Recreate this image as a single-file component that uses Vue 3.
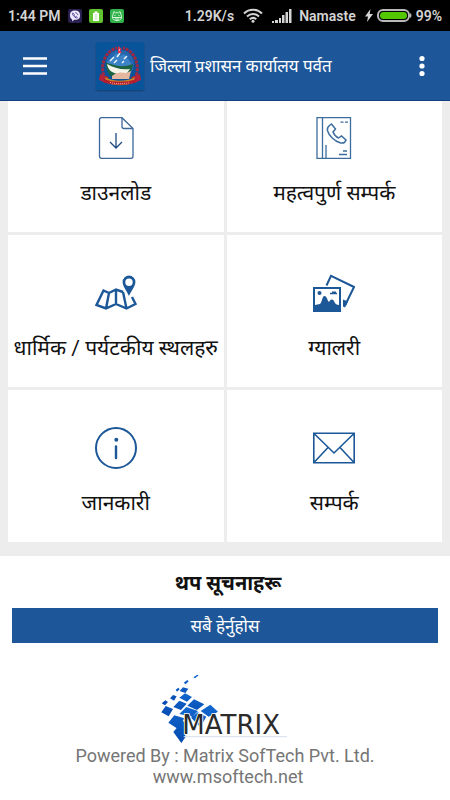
<script setup>
const tiles = [
  { icon: 'download', label: 'डाउनलोड' },
  { icon: 'phonebook', label: 'महत्वपुर्ण सम्पर्क' },
  { icon: 'map', label: 'धार्मिक / पर्यटकीय स्थलहरु' },
  { icon: 'gallery', label: 'ग्यालरी' },
  { icon: 'info', label: 'जानकारी' },
  { icon: 'mail', label: 'सम्पर्क' }
]
</script>

<template>
  <div class="app">
    <!-- status bar -->
    <div class="status-bar">
      <span class="clock">1:44 PM</span>
      <svg class="status-icon" viewBox="0 0 14 14">
        <rect width="14" height="14" rx="2" fill="#2b2150" />
        <path d="M7 1.5C3.5 1.5 2 3 2 6.2c0 2.300.8 3.600 2.200 4.200v2.100l2-1.700c4 .2 5.800-1 5.800-4.600C12 3 10.500 1.500 7 1.500z" fill="#eee9ff" />
        <path d="M4.700 3.900c-.7.6 0 2.200 1.300 3.500s2.800 2 3.500 1.300L8.300 7.500l-.8.4-1.600-1.600.4-.9zM7.300 3.700c1.500.1 2.400 1 2.500 2.500" fill="none" stroke="#5b479c" />
      </svg>
      <svg class="status-icon" viewBox="0 0 14 14">
        <rect width="14" height="14" rx="2" fill="#62c331" />
        <path d="M5.500 2.500h3V4H10v8H4V4h1.500z" fill="#fff" />
        <path d="M5.500 6h3M5.500 8h3M5.500 10h3" stroke="#b9e5a2" />
      </svg>
      <svg class="status-icon" viewBox="0 0 14 14">
        <rect width="14" height="14" rx="2" fill="#32b34a" />
        <path d="M3 5.500 4 2.500l1.500 1.300h3L10 2.500l1 3c1.300 3.400.3 6-4 6s-5.300-2.600-4-6z" fill="none" stroke="#d7f5dc" />
        <path d="M4.500 6.500h1M8.500 6.500h1M3 8.500h8M5 10h4" stroke="#d7f5dc" />
      </svg>
      <span class="speed">1.29K/s</span>
      <svg class="wifi" viewBox="0 0 20 15">
        <g fill="none" stroke="#d4d4d4" stroke-width="2">
          <path d="M1 5.500c5-5 13-5 18 0" />
          <path d="M4 8.500c3.500-3.300 8.500-3.300 12 0" />
          <path d="M6.700 11.300c2-1.700 4.600-1.700 6.600 0" />
        </g>
        <circle cx="10" cy="13.300" r="1.500" fill="#d4d4d4" />
      </svg>
      <svg class="signal" viewBox="0 0 20 14">
        <path d="M0 14v-2h2v2zM3 14v-3h3v3zM7 14V9h2v5zM10 14V6h2.500v8zM13.500 14V3H16v11zM17 14V0h2.500v14z" fill="#d4d4d4" />
      </svg>
      <span>Namaste</span>
      <svg class="bolt" viewBox="0 0 8 13">
        <path d="M5.500 0 0 7.500h3L2 13l6-8H4.700z" fill="#d4d4d4" />
      </svg>
      <svg class="battery" viewBox="0 0 35 13">
        <rect x="1" y="1" width="31" height="11" rx="5" fill="#000" stroke="#b9b9b9" stroke-width="2" />
        <rect x="3" y="3" width="27" height="7" rx="3.500" fill="#53c800" />
        <path d="M33 4c2 1 2 4 0 5z" fill="#b9b9b9" />
      </svg>
      <span>99%</span>
    </div>

    <!-- app bar -->
    <header class="app-bar">
      <button class="menu-btn" aria-label="Menu">
        <svg viewBox="0 0 24 18">
          <path d="M0 1.500h24M0 9h24M0 16.500h24" stroke="#fff" stroke-width="2.400" />
        </svg>
      </button>
      <svg class="emblem" viewBox="0 0 48 48">
        <rect width="48" height="48" rx="2" fill="#07549a" />
        <path d="M9 37C3 24 9 9 21 6M39 37c6-13 0-28-12-31" fill="none" stroke="#a32740" stroke-width="3" stroke-dasharray="3 1" />
        <path d="M4 32l9 3-3 6-7-3zM44 32l-9 3 3 6 7-3z" fill="#b3243a" />
        <circle cx="24" cy="22" r="14" fill="#2467ae" />
        <path d="M11 20l6-5 3-4 4 3 4-2 8 10-1 5H12z" fill="#3c82c6" />
        <path d="M14 19l4-4M21 15l3-4M28 17l3-3M18 21l3-3M26 21l2-2" stroke="#e8f4ff" stroke-width="1.500" />
        <path d="M10 21c8 1 12 6 27 1-1 9-7 15-14 15-8 0-13-7-13-16z" fill="#1d6341" />
        <path d="M11 22c7 4 14 6 23 5l-3 4-9 1c-6-1-10-4-11-10z" fill="#f4f4e9" />
        <path d="M16 34c4-4 9-4 14-3l5-2-2 8H16z" fill="#e5b79e" />
        <path d="M9 35c8 5 22 5 30 0l-2 6c-8 3-18 3-26 0z" fill="#c88725" />
        <path d="M8 39c9 3 23 3 32 0" fill="none" stroke="#b51c2f" stroke-width="3" />
        <path d="M14 40.500c7 1.500 13 1.500 20 0" fill="none" stroke="#efb1a1" stroke-dasharray="1 1" />
        <path d="M22 4l4 3-2 1 2 3h-4z" fill="#e4314c" />
        <path d="M23 8h1" stroke="#fff" />
      </svg>
      <h1 class="app-title">जिल्ला प्रशासन कार्यालय पर्वत</h1>
      <button class="more-btn" aria-label="More options">
        <svg viewBox="0 0 6 22">
          <circle cx="3" cy="3.500" r="2.600" fill="#fff" />
          <circle cx="3" cy="11" r="2.600" fill="#fff" />
          <circle cx="3" cy="18.500" r="2.600" fill="#fff" />
        </svg>
      </button>
    </header>

    <main>
      <section class="menu">
        <nav class="tiles">
          <a v-for="tile in tiles" :key="tile.icon" class="tile" href="#">
            <svg v-if="tile.icon === 'download'" class="tile-icon" viewBox="0 0 42 42">
              <g fill="none" stroke="#3d6899" stroke-width="1.300">
                <path d="M27 .7H6.500a2 2 0 0 0-2 2v36.600a2 2 0 0 0 2 2H36a2 2 0 0 0 2-2V11.500z" />
                <path d="M27 .7v8.800a2 2 0 0 0 2 2h9" />
                <path d="M21 16v14.500M15 25l6 6 6-6" stroke="#1d4b80" />
              </g>
            </svg>
            <svg v-else-if="tile.icon === 'phonebook'" class="tile-icon" viewBox="0 0 42 42">
              <g fill="none" stroke="#3d6d9f" stroke-width="1.300">
                <path d="M4 .7h33.500v40.600H4zM9.500 .7v40.600M13 28v13M27.500 5.200h3M32 5.200h3M30 34h4M26 37.500h8" />
                <path d="M16.500 8.500l2-1.500 4 5-2.500 3c1 2.800 3 4.800 5.500 6l3-2 4.500 4c-1 3-3.500 3.500-6 2.700-5.500-1.500-11-7-12.500-12-.5-2 .3-3.800 2-5.200z" stroke-width="1.500" />
              </g>
            </svg>
            <svg v-else-if="tile.icon === 'map'" class="tile-icon" viewBox="0 0 42 42">
              <path d="M34 3.500a6.400 6.400 0 0 0-6.400 6.500c0 4.200 3.600 8 6.400 14 2.800-6 6.400-9.800 6.400-14A6.400 6.400 0 0 0 34 3.500zm0 3a3.700 3.700 0 1 1 0 7.400 3.700 3.700 0 0 1 0-7.400z" fill="#1c5797" />
              <path d="M28 20l-7-2.500-7 3.500-5.500-2.500-7 14.500L11 36.500l10-4.500 10.500 4.500 9-4.500-3.500-7M14 21l-3 15.500M21 17.500V32M28 20l3.500 16.500" fill="none" stroke="#1c5797" stroke-width="2.400" />
            </svg>
            <svg v-else-if="tile.icon === 'gallery'" class="tile-icon" viewBox="0 -3 42 42">
              <path d="M13.500 10.500 18 .8l23 11.200-9 18.500" fill="none" stroke="#1c5797" stroke-width="2" />
              <path d="M30 24.500l5 2-3 6-2-1z" fill="#1c5797" />
              <path d="M0 12h28v25H0zm2 2v16l5-1c2-1 2-8 4.500-8s3 5 4.500 6c2-3 3-3 5-1 1 3 3 4 5 4V14z" fill="#1c5797" fill-rule="evenodd" />
              <circle cx="6.500" cy="18" r="2" fill="#1c5797" />
              <path d="M17 18.500h7M19 17.300h4" stroke="#1c5797" stroke-width="1.600" />
            </svg>
            <svg v-else-if="tile.icon === 'info'" class="tile-icon" viewBox="0 0 42 42">
              <circle cx="21" cy="21" r="20" fill="none" stroke="#1c5797" stroke-width="2" />
              <circle cx="21.300" cy="12.800" r="2" fill="#1c5797" />
              <path d="M21 19.500v11.500" stroke="#1c5797" stroke-width="2.400" stroke-linecap="round" />
            </svg>
            <svg v-else class="tile-icon" viewBox="0 0 42 42">
              <path d="M.8 6.300h40.400v29.400H.8zM1 6.500l20 19.500L41 6.500M1 35.500l14-15M41 35.500l-14-15" fill="none" stroke="#1c5797" stroke-width="1.600" />
            </svg>
            <span class="tile-label">{{ tile.label }}</span>
          </a>
        </nav>
      </section>

      <section class="notices">
        <h2 class="notices-title">थप सूचनाहरू</h2>
        <button class="view-all">सबै हेर्नुहोस</button>
      </section>
    </main>

    <footer class="footer">
      <svg class="logo" viewBox="66 36 384 216">
        <defs>
          <linearGradient id="blue" x1="0" y1="0" x2="0" y2="1">
            <stop offset="0" stop-color="#1268cf" />
            <stop offset="1" stop-color="#064bb0" />
          </linearGradient>
        </defs>
        <g fill="url(#blue)">
          <path d="M163 49l12-8 4 2-11 9zM134 65l11-8 4 4-9 9zM110 86l8-6 4 5-8 7zM122 90l10-11 16 4-9 13zM93 112l9-10 11 4-8 13zM68 127l11-9 8 5-9 10z" />
          <path d="M121 110l17-13 21 11-15 14zM103 138l18-19 22 9-17 19zM145 134l20-19 31 15-22 17zM67 154l13-19 22 9-13 22z" />
          <path d="M121 159l21-21 35 12-17 17zM185 150l29-19 23 21-28 15zM88 185l18-22 30 9-18 33zM156 170l20-16 26 13-18 31zM103 213l27-33 9 4v45l-12 17z" />
        </g>
        <path d="M134 227h310" stroke="#d5dfee" stroke-width="3" />
        <text x="130" y="219" class="logo-text">MATRIX</text>
      </svg>
      <p>Powered By : Matrix SofTech Pvt. Ltd.</p>
      <a href="#">www.msoftech.net</a>
    </footer>
  </div>
</template>

<style>
body {
  margin: 0;
  background: #fff;
}
</style>

<style scoped>
.app {
  min-height: 100vh;
  overflow: hidden;
  background: #fff;
  font-family: Roboto, 'Noto Sans', 'Noto Sans Devanagari', sans-serif;
  color: #111;
}

.status-bar {
  display: flex;
  align-items: center;
  gap: 7px;
  height: 31px;
  padding: 0 8px;
  background: #000;
  color: #d4d4d4;
  font-size: 14px;
  font-weight: 600;
  white-space: nowrap;
}

.status-icon {
  width: 14px;
  height: 14px;
}

.speed {
  margin-left: auto;
}

.wifi {
  width: 20px;
  height: 15px;
  margin: 0 2px;
}

.signal {
  width: 20px;
  height: 14px;
}

.bolt {
  width: 8px;
  height: 13px;
  margin-left: 2px;
}

.battery {
  width: 35px;
  height: 13px;
  margin: 0 -3px;
}

.app-bar {
  position: relative;
  z-index: 1;
  display: flex;
  align-items: center;
  height: 69px;
  padding: 0 18px 0 16px;
  background: #1e5799;
  border-bottom: 1px solid #123f7c;
  color: #fff;
}

.menu-btn,
.more-btn {
  display: flex;
  padding: 7px;
  border: none;
  background: none;
  cursor: pointer;
}

.menu-btn svg {
  width: 24px;
  height: 18px;
}

.more-btn {
  margin-left: auto;
}

.more-btn svg {
  width: 6px;
  height: 22px;
}

.emblem {
  width: 48px;
  height: 48px;
  margin: 0 6px 0 42px;
  border-radius: 2px;
  box-shadow: 0 1px 2px rgba(0, 0, 0, 0.3);
}

.app-title {
  margin: 0;
  font-size: 17px;
  font-weight: 400;
  line-height: 30px;
  white-space: nowrap;
}

.menu {
  padding: 0 8px 14px;
  background: #ededed;
}

/* the list is scrolled a little way under the app bar */
.tiles {
  display: grid;
  grid-template-columns: 1fr 1fr;
  gap: 3px;
  margin-top: -21px;
}

.menu,
.notices {
  display: flow-root;
}

.tile {
  display: flex;
  flex-direction: column;
  align-items: center;
  gap: 19px;
  padding: 37px 0 24px;
  background: #fff;
  color: #111;
  text-decoration: none;
}

.tile-icon {
  width: 42px;
  height: 42px;
}

.tile-label {
  font-size: 21px;
  line-height: 30px;
  white-space: nowrap;
}

.notices {
  padding: 12px 12px 0;
  text-align: center;
}

.notices-title {
  margin: 0 0 10px;
  padding-left: 6px;
  font-size: 20px;
  font-weight: 700;
  line-height: 30px;
}

.view-all {
  width: 100%;
  height: 35px;
  padding: 0;
  border: none;
  background: #1e5799;
  color: #fff;
  font-family: inherit;
  font-size: 17px;
  line-height: 30px;
  cursor: pointer;
}

.footer {
  display: flex;
  flex-direction: column;
  align-items: center;
  padding: 30px 0 12px;
  color: #757575;
  font-size: 18px;
  line-height: 21px;
}

.footer p {
  margin: 0;
}

.footer a {
  padding-left: 6px;
  color: inherit;
  text-decoration: none;
}

.logo {
  width: 128px;
  height: 72px;
}

.logo-text {
  font-family: 'DejaVu Sans', sans-serif;
  font-size: 78px;
  fill: #2b2b2b;
  stroke: #fff;
  stroke-width: 5px;
  paint-order: stroke;
}
</style>
